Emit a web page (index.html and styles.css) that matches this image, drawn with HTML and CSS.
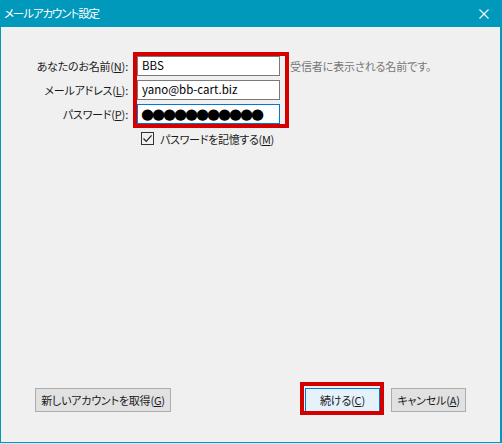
FILE: index.html
```html
<!DOCTYPE html>
<html lang="ja">
<head>
<meta charset="utf-8">
<title>メールアカウント設定</title>
<link rel="stylesheet" href="styles.css">
</head>
<body>
<div class="window">
  <div class="titlebar">
    <span class="title">メールアカウント設定</span>
    <svg class="close" width="10" height="10" viewBox="0 0 10 10"><path d="M0.5 0.5 L9.5 9.5 M9.5 0.5 L0.5 9.5" stroke="#ffffff" stroke-width="1.1" fill="none"/></svg>
  </div>
  <div class="content">
    <div class="form">
      <label class="lbl">あなたのお名前(<u>N</u>):</label>
      <div class="field">BBS</div>
      <div class="hint">受信者に表示される名前です。</div>
      <label class="lbl">メールアドレス(<u>L</u>):</label>
      <div class="field">yano@bb-cart.biz</div>
      <div></div>
      <label class="lbl">パスワード(<u>P</u>):</label>
      <div class="field focus dots">●●●●●●●●●●●</div>
      <div></div>
      <div></div>
      <div class="check-row">
        <span class="checkbox"><svg width="11" height="11" viewBox="0 0 11 11"><path d="M1.5 5.5 L4.2 8.3 L9.6 2.4" stroke="#222" stroke-width="1.2" fill="none"/></svg></span>
        <span class="check-label">パスワードを記憶する(<u>M</u>)</span>
      </div>
    </div>
    <div class="footer">
      <button class="btn btn-new">新しいアカウントを取得(<u>G</u>)</button>
      <div class="spacer"></div>
      <button class="btn btn-primary">続ける(<u>C</u>)</button>
      <button class="btn btn-cancel">キャンセル(<u>A</u>)</button>
    </div>
  </div>
  <div class="mark mark-fields"></div>
  <div class="mark mark-continue"></div>
</div>
</body>
</html>
```

FILE: styles.css
```css
* { box-sizing: border-box; }
html, body { margin: 0; padding: 0; }
body {
  width: 502px;
  height: 444px;
  background: #dfe6ee;
  font-family: "Noto Sans CJK JP", "Noto Sans", sans-serif;
  font-size: 11px;
  color: #1a1a1a;
  font-feature-settings: "palt";
  overflow: hidden;
}
.window {
  position: relative;
  width: 502px;
  height: 443px;
  border: 1px solid #0099bc;
  border-right-width: 2px;
  border-top: none;
  background: #f0f0f0;
  display: flex;
  flex-direction: column;
}
.titlebar {
  height: 27px;
  background: #0099bc;
  display: flex;
  align-items: center;
  padding: 0 11px 1px 3px;
  color: #ffffff;
}
.title { flex: 1; line-height: 14px; font-size: 11.5px; letter-spacing: -1.1px; }
.close { display: block; margin-top: 1px; }
.content {
  flex: 1;
  display: flex;
  flex-direction: column;
  padding: 29px 34px 30px 34px;
}
.form {
  display: grid;
  grid-template-columns: 93px 143px auto;
  grid-auto-rows: 20px;
  column-gap: 9px;
  row-gap: 4px;
  align-items: center;
}
.lbl {
  justify-self: end;
  white-space: nowrap;
  color: #1a1a1a;
  letter-spacing: -0.2px;
}
.field {
  height: 20px;
  border: 1px solid #7a7a7a;
  background: #ffffff;
  padding: 0 4px;
  line-height: 17px;
  font-size: 11.5px;
  color: #000;
  white-space: nowrap;
  overflow: hidden;
}
.field.focus { border-color: #0078d7; }
.dots {
  font-family: "DejaVu Sans", sans-serif;
  font-size: 15px;
  letter-spacing: -2.1px;
  line-height: 18px;
  padding-left: 3px;
}
.hint {
  color: #777777;
  margin-left: 1px;
  white-space: nowrap;
  letter-spacing: -0.1px;
}
.check-row {
  display: flex;
  align-items: center;
  gap: 6px;
  padding-left: 4px;
  margin-top: 1px;
  white-space: nowrap;
}
.check-label { letter-spacing: -0.3px; }
.checkbox {
  width: 13px;
  height: 13px;
  border: 1px solid #333333;
  background: transparent;
  display: flex;
  align-items: center;
  justify-content: center;
}
.checkbox svg { display: block; }
.footer {
  margin-top: auto;
  display: flex;
  align-items: center;
  gap: 11px;
}
.spacer { flex: 1; }
.btn {
  height: 24px;
  border: 1px solid #adadad;
  background: #e1e1e1;
  font-family: inherit;
  font-size: 11px;
  font-feature-settings: "palt";
  letter-spacing: -0.2px;
  color: #1a1a1a;
  padding: 0 4px;
  white-space: nowrap;
  margin: 0;
}
.btn-new { width: 136px; }
.btn-primary { width: 75px; border-color: #0078d7; background: #e5f1fb; }
.btn-cancel { width: 75px; }
.mark {
  position: absolute;
  border: 4px solid #d40000;
  pointer-events: none;
}
.mark-fields { left: 132px; top: 52px; width: 156px; height: 76px; }
.mark-continue { left: 299px; top: 382px; width: 84px; height: 33px; }
```
